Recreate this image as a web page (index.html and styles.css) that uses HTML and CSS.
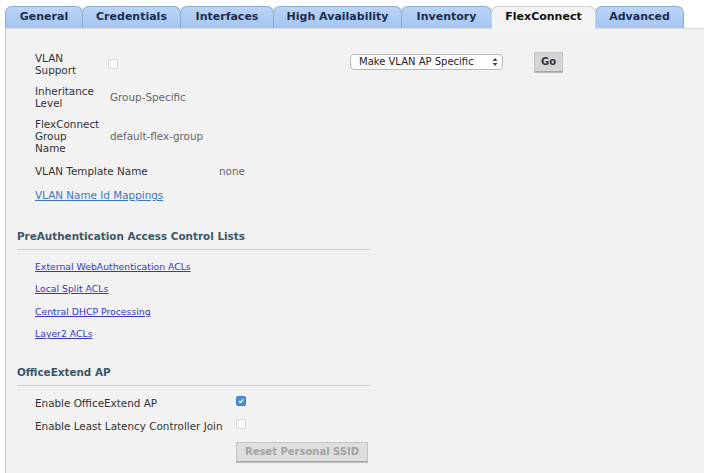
FILE: index.html
```html
<!DOCTYPE html>
<html>
<head>
<meta charset="utf-8">
<link rel="stylesheet" href="styles.css">
</head>
<body>
<div class="tabs">
  <div class="tab t-general">General</div>
  <div class="tab t-cred">Credentials</div>
  <div class="tab t-intf">Interfaces</div>
  <div class="tab t-ha">High Availability</div>
  <div class="tab t-inv">Inventory</div>
  <div class="tab active t-flex">FlexConnect</div>
  <div class="tab t-adv">Advanced</div>
</div>
<div class="panel">
  <div class="fields">
    <div class="row row-vlan">
      <div class="label">VLAN<br>Support</div>
      <span class="cb"></span>
      <div class="select">
        <span>Make VLAN AP Specific</span>
        <svg class="arrows" width="6" height="10" viewBox="0 0 6 10"><path d="M0.5 4 L3 1 L5.5 4 Z M0.5 6 L3 9 L5.5 6 Z" fill="#444"/></svg>
      </div>
      <div class="btn go">Go</div>
    </div>
    <div class="row row-inh">
      <div class="label">Inheritance<br>Level</div>
      <div class="value">Group-Specific</div>
    </div>
    <div class="row row-group">
      <div class="label">FlexConnect<br>Group<br>Name</div>
      <div class="value">default-flex-group</div>
    </div>
    <div class="row row-tmpl">
      <div class="label wide">VLAN Template Name</div>
      <div class="value">none</div>
    </div>
    <a class="link-main" href="#">VLAN Name Id Mappings</a>
  </div>

  <div class="section sec-pre">
    <div class="sec-title">PreAuthentication Access Control Lists</div>
    <div class="sec-links">
      <a href="#">External WebAuthentication ACLs</a>
      <a href="#">Local Split ACLs</a>
      <a href="#">Central DHCP Processing</a>
      <a href="#">Layer2 ACLs</a>
    </div>
  </div>

  <div class="section sec-oe">
    <div class="sec-title">OfficeExtend AP</div>
    <div class="oe-rows">
      <div class="oe-row">
        <div class="oe-label">Enable OfficeExtend AP</div>
        <span class="cb checked"><svg width="10" height="10" viewBox="0 0 10 10"><path d="M2.6 5.2 L4.3 6.9 L7.5 3.2" fill="none" stroke="#fff" stroke-width="1.4" stroke-linecap="round" stroke-linejoin="round"/></svg></span>
      </div>
      <div class="oe-row">
        <div class="oe-label">Enable Least Latency Controller Join</div>
        <span class="cb"></span>
      </div>
      <div class="oe-row">
        <div class="oe-label"></div>
        <div class="btn reset">Reset Personal SSID</div>
      </div>
    </div>
  </div>
</div>
</body>
</html>
```

FILE: styles.css
```css
* { box-sizing: border-box; }
html, body { height: 100%; }
body {
  margin: 0;
  background: #ffffff;
  font-family: "DejaVu Sans", Verdana, sans-serif;
  font-size: 10.4px;
  color: #333;
  display: flex;
  flex-direction: column;
}
.tabs {
  display: flex;
  padding: 6px 0 0 5px;
  height: 28px;
  align-items: flex-end;
}
.tab {
  height: 22px;
  line-height: 20px;
  text-align: center;
  font-weight: bold;
  font-size: 11px;
  color: #1b2c52;
  background: linear-gradient(#b9d5f7, #a4c5f0);
  border: 1px solid #8eaad2;
  border-bottom: none;
  border-radius: 7px 7px 0 0;
  margin-right: -1px;
}
.t-general { width: 78px; }
.t-cred { width: 99px; }
.t-intf { width: 94px; }
.t-ha { width: 129px; }
.t-inv { width: 91px; }
.t-flex { width: 105px; }
.t-adv { width: 89px; }
.tab.active {
  background: #f3f3f3;
  border-color: #d0d0d0;
  color: #111;
  position: relative;
  z-index: 1;
  height: 23px;
  margin-bottom: -1px;
}
.panel {
  flex: 1;
  margin-left: 5px;
  background: #f2f2f2;
  border-left: 1px solid #c8c8c8;
  border-top: 1px solid #dcdcdc;
}
.fields {
  padding: 23px 0 0 29px;
  display: flex;
  flex-direction: column;
}
.row {
  display: flex;
  align-items: center;
  line-height: 12px;
}
.label { width: 75px; color: #333; }
.label.wide { width: 184px; }
.value { color: #666; }
.row-vlan .label { width: 73px; }
.row-inh { margin-top: 9px; }
.row-group { margin-top: 9px; }
.row-tmpl { margin-top: 11px; }
.cb {
  display: inline-block;
  width: 10px;
  height: 10px;
  background: #fff;
  border: 1px solid #d4d4d4;
  border-radius: 2px;
  flex: none;
}
.cb.checked {
  background: #4a8fe0;
  border-color: #3f7fce;
  display: flex;
  align-items: center;
  justify-content: center;
}
.cb.checked svg { display: block; }
.row-vlan .cb { margin-top: -1px; }
.select {
  margin-left: 232px;
  width: 153px;
  height: 16px;
  background: #fff;
  border: 1px solid #b9b9b9;
  border-radius: 4px;
  display: flex;
  align-items: center;
  justify-content: space-between;
  padding: 0 4px 0 8px;
  color: #222;
  font-size: 10px;
  margin-top: -5px;
}
.arrows { display: block; }
.btn {
  background: #d5d5d5;
  border: 1px solid #c4c4c4;
  border-bottom-color: #a8a8a8;
  box-shadow: 0 1px 0 #bdbdbd;
  font-weight: bold;
  text-align: center;
  color: #333;
  font-size: 10px;
}
.go {
  margin-left: 31px;
  width: 29px;
  height: 20px;
  line-height: 18px;
  margin-top: -5px;
}
.link-main {
  margin-top: 12px;
  color: #3d76c8;
  line-height: 12px;
  text-decoration: underline;
  align-self: flex-start;
}
.section { padding-left: 11px; }
.sec-pre { margin-top: 29px; }
.sec-oe { margin-top: 26px; }
.sec-title {
  font-weight: bold;
  color: #3d5666;
  width: 353px;
  line-height: 12px;
  padding-bottom: 7px;
  border-bottom: 1px solid #cfcfcf;
}
.sec-links {
  padding: 11px 0 0 18px;
  display: flex;
  flex-direction: column;
  align-items: flex-start;
  gap: 10.3px;
}
.sec-links a {
  font-size: 9.3px;
  line-height: 12px;
  color: #3838b8;
  text-decoration: underline;
}
.oe-rows {
  padding: 11px 0 0 18px;
  display: flex;
  flex-direction: column;
  gap: 11px;
}
.oe-row {
  display: flex;
  align-items: center;
  line-height: 12px;
}
.oe-label { width: 201px; }
.oe-row .cb { margin-top: -3px; }
.reset {
  width: 132px;
  height: 20px;
  line-height: 18px;
  color: #a3a3a3;
  background: #dedede;
  margin-top: -1px;
}
```
